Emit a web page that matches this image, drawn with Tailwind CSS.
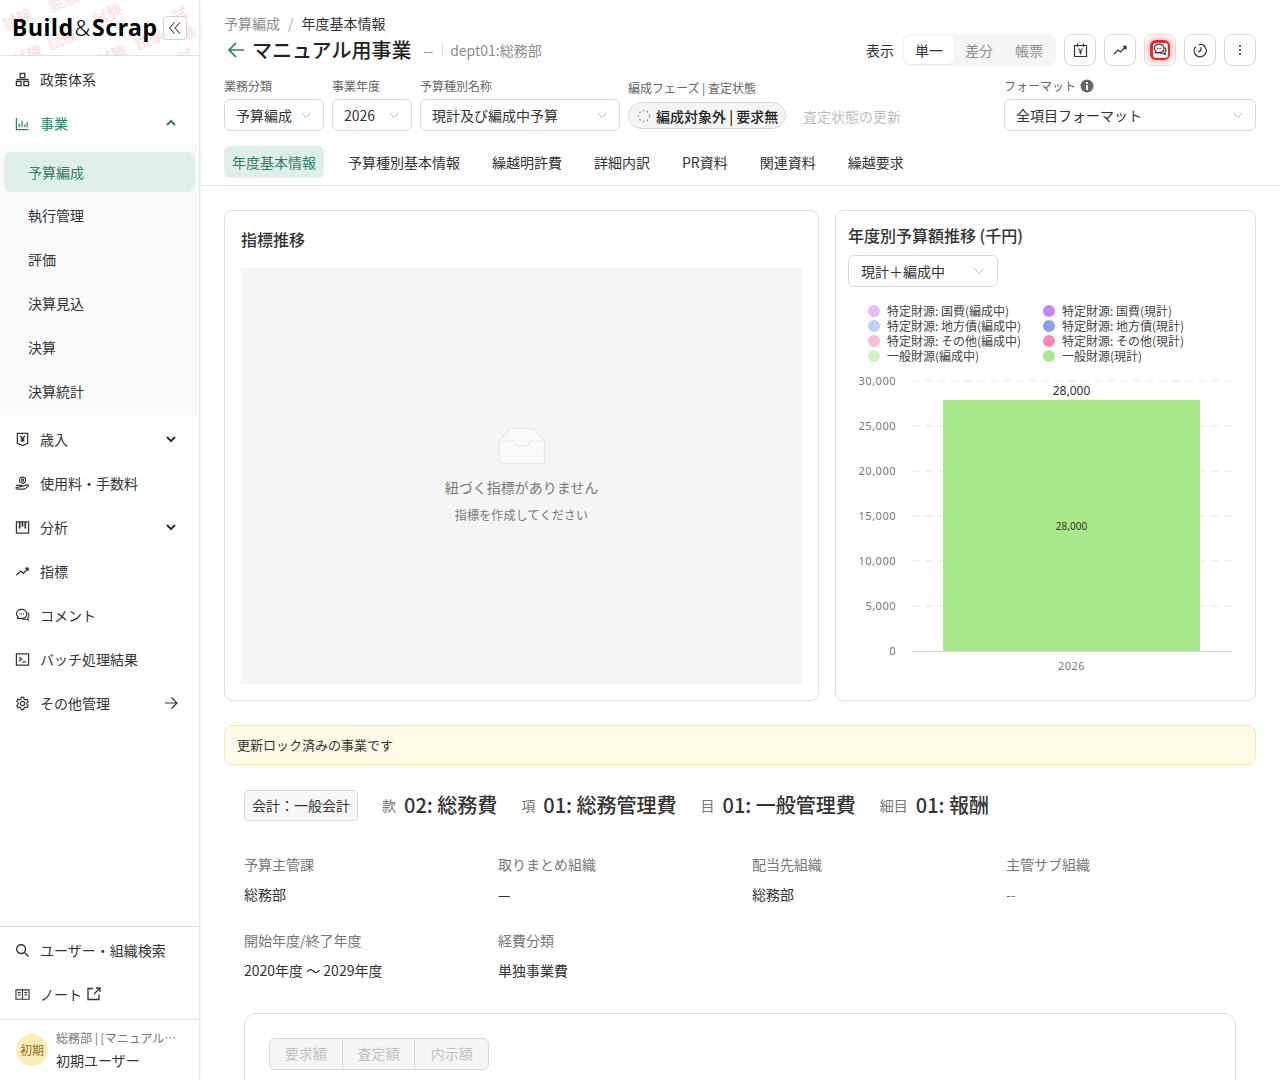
<!DOCTYPE html>
<html lang="ja">
<head>
    <meta charset="UTF-8">
    <title>年度基本情報</title>
    <script src="https://cdn.jsdelivr.net/npm/@tailwindcss/browser@4"></script>
</head>
<body class="bg-white text-[#333] font-['Noto_Sans_CJK_JP','Noto_Sans',sans-serif] text-sm">
<div class="flex w-[1280px] h-[1080px] overflow-hidden">

    <!-- サイドバー -->
    <aside class="w-[200px] shrink-0 h-full flex flex-col border-r border-[#e8e8e8] shadow-[1px_0_3px_rgba(0,0,0,0.06)] bg-white z-10">
        <div class="relative h-[56px] shrink-0 border-b border-[#e0e0e0] overflow-hidden flex items-center justify-between pl-3 pr-[12px]">
            <span class="absolute left-[2px] top-[8px] -rotate-[25deg] text-[15px] text-[#fadbdf]">試験</span>
            <span class="absolute left-[48px] top-[-10px] -rotate-[25deg] text-[15px] text-[#fadbdf]">試験</span>
            <span class="absolute left-[92px] top-[3px] -rotate-[25deg] text-[15px] text-[#fadbdf]">試験</span>
            <span class="absolute left-[176px] top-[0px] -rotate-[25deg] text-[15px] text-[#fadbdf]">試験</span>
            <span class="absolute left-[47px] top-[28px] -rotate-[25deg] text-[15px] text-[#fadbdf]">試験</span>
            <span class="absolute left-[134px] top-[28px] -rotate-[25deg] text-[15px] text-[#fadbdf]">試験</span>
            <span class="absolute left-[12px] top-[44px] -rotate-[25deg] text-[15px] text-[#fadbdf]">試験</span>
            <span class="absolute left-[97px] top-[44px] -rotate-[25deg] text-[15px] text-[#fadbdf]">試験</span>
            <span class="absolute left-[182px] top-[44px] -rotate-[25deg] text-[15px] text-[#fadbdf]">試験</span>
            <div class="relative flex items-baseline text-[23px] leading-none font-bold text-black font-['Noto_Sans',sans-serif] tracking-[0.6px]">Build<span class="font-light text-[22px] mx-[1px]">&amp;</span>Scrap</div>
            <button class="relative w-6 h-6 border border-[#d0d0d0] rounded bg-white/70 flex items-center justify-center text-[#444]">
                <svg class="w-4 h-4" viewBox="0 0 16 16" fill="none" stroke="currentColor" stroke-width="1.1"><path d="M7.5 2.5 2.5 8l5 5.5M13 2.5 8 8l5 5.5"/></svg>
            </button>
        </div>

        <nav class="flex flex-col grow pt-[1px]">
            <a class="h-11 flex items-center gap-[10px] pl-[15px] text-[#333]">
                <svg class="w-[15px] h-[15px]" viewBox="0 0 16 16" fill="none" stroke="currentColor" stroke-width="1.4"><rect x="5.5" y="1.5" width="5" height="4.5"/><rect x="1.5" y="10" width="5" height="4.5"/><rect x="9.5" y="10" width="5" height="4.5"/><path d="M1.5 8h13"/></svg>
                政策体系
            </a>
            <a class="h-11 flex items-center gap-[10px] pl-[15px] pr-[22px] text-[#2f7d6b]">
                <svg class="w-[15px] h-[15px]" viewBox="0 0 16 16" fill="none" stroke="currentColor" stroke-width="1.3"><path d="M1.5 2v12.5h13M4.5 8v4M7.5 5v7M10.5 9v3M13 6.5V12"/></svg>
                <span class="grow">事業</span>
                <svg class="w-[12px] h-[12px]" viewBox="0 0 12 12" fill="none" stroke="currentColor" stroke-width="2"><path d="M2 8l4-4 4 4"/></svg>
            </a>
            <div class="flex flex-col bg-[#fafafa] pt-[7px] pb-[2px]">
                <a class="mx-1 h-10 flex items-center pl-[24px] rounded-lg bg-[#deefe9] text-[#2f7d6b]">予算編成</a>
                <a class="h-11 mt-[1px] flex items-center pl-[28px]">執行管理</a>
                <a class="h-11 flex items-center pl-[28px]">評価</a>
                <a class="h-11 flex items-center pl-[28px]">決算見込</a>
                <a class="h-11 flex items-center pl-[28px]">決算</a>
                <a class="h-11 flex items-center pl-[28px]">決算統計</a>
            </div>
            <a class="h-11 mt-[2px] flex items-center gap-[10px] pl-[15px] pr-[22px]">
                <svg class="w-[15px] h-[15px]" viewBox="0 0 16 16" fill="none" stroke="currentColor" stroke-width="1.3"><path d="M2.5 1.5h11V12L8 14.5 2.5 12zM5.5 4 8 7l2.500-3M8 7v4M6 7.500h4M6 9.300h4"/></svg>
                <span class="grow">歳入</span>
                <svg class="w-[12px] h-[12px]" viewBox="0 0 12 12" fill="none" stroke="currentColor" stroke-width="2"><path d="M2 4l4 4 4-4"/></svg>
            </a>
            <a class="h-11 flex items-center gap-[10px] pl-[15px]">
                <svg class="w-[15px] h-[15px]" viewBox="0 0 16 16" fill="none" stroke="currentColor" stroke-width="1.2"><circle cx="8" cy="4.500" r="3.300"/><circle cx="8" cy="4.500" r="1.200"/><path d="M1 10h5.500c1 0 1.500.5 1.500 1.200H5.500M8 11l5-1.500c1.200-.3 1.800 1 1 1.600L10 14H3c-1 0-2-.5-2-1.500z"/></svg>
                使用料・手数料
            </a>
            <a class="h-11 flex items-center gap-[10px] pl-[15px] pr-[22px]">
                <svg class="w-[15px] h-[15px]" viewBox="0 0 16 16" fill="none" stroke="currentColor" stroke-width="1.3"><rect x="1.500" y="2" width="13" height="12"/><path d="M5 2v7M8 2v5M11 2v7" stroke-width="1.800"/></svg>
                <span class="grow">分析</span>
                <svg class="w-[12px] h-[12px]" viewBox="0 0 12 12" fill="none" stroke="currentColor" stroke-width="2"><path d="M2 4l4 4 4-4"/></svg>
            </a>
            <a class="h-11 flex items-center gap-[10px] pl-[15px]">
                <svg class="w-[15px] h-[15px]" viewBox="0 0 16 16" fill="none" stroke="currentColor" stroke-width="1.4"><path d="M1.500 12 6 7.500 9 10l5-5.500M11 4.500h3v3"/></svg>
                指標
            </a>
            <a class="h-11 flex items-center gap-[10px] pl-[15px]">
                <svg class="w-[15px] h-[15px]" viewBox="0 0 16 16" fill="none" stroke="currentColor" stroke-width="1.2"><path d="M7 1.500c3.200 0 5.500 2 5.500 4.800S10.200 11 7 11H2.500l.8-1.700C2 8.500 1.500 7.400 1.500 6.300 1.500 3.500 3.800 1.500 7 1.500z"/><path d="M13.500 5c1 .8 1.300 2 1.300 3 0 1-.5 2-1.300 2.700l.8 2.300-3.500-1.200H7.500"/><path d="M4.700 6.300h.9M6.600 6.300h.9M8.500 6.300h.9"/></svg>
                コメント
            </a>
            <a class="h-11 flex items-center gap-[10px] pl-[15px]">
                <svg class="w-[15px] h-[15px]" viewBox="0 0 16 16" fill="none" stroke="currentColor" stroke-width="1.3"><rect x="1.500" y="2" width="13" height="12"/><path d="m4.500 5.500 2.500 2-2.500 2M8 10.500h3.500"/></svg>
                バッチ処理結果
            </a>
            <a class="h-11 flex items-center gap-[10px] pl-[15px] pr-[21px]">
                <svg class="w-[15px] h-[15px]" viewBox="0 0 16 16" fill="none" stroke="currentColor" stroke-width="1.2"><circle cx="8" cy="8" r="2.300"/><path d="M6.700 1.500h2.600l.4 1.900 1.300.7 1.800-.6 1.300 2.300-1.400 1.300v1.800l1.400 1.300-1.300 2.300-1.800-.6-1.300.7-.4 1.900H6.700l-.4-1.900-1.300-.7-1.800.6-1.300-2.300 1.400-1.300V7.100L1.900 5.800l1.300-2.300 1.800.6 1.300-.7z"/></svg>
                <span class="grow">その他管理</span>
                <svg class="w-[14px] h-[14px]" viewBox="0 0 14 14" fill="none" stroke="currentColor" stroke-width="1.200"><path d="M1 7h12M7.500 1.500 13 7l-5.500 5.500"/></svg>
            </a>
        </nav>

        <div class="border-t border-[#e0e0e0] pt-[1px] pb-[3px]">
            <a class="h-11 flex items-center gap-[10px] pl-[15px]">
                <svg class="w-[15px] h-[15px]" viewBox="0 0 16 16" fill="none" stroke="currentColor" stroke-width="1.500"><circle cx="6.500" cy="6.500" r="4.700"/><path d="m10 10 4.500 4.500"/></svg>
                ユーザー・組織検索
            </a>
            <a class="h-11 flex items-center gap-[10px] pl-[15px]">
                <svg class="w-[15px] h-[15px]" viewBox="0 0 16 16" fill="none" stroke="currentColor" stroke-width="1.200"><path d="M1 3h14v10H1zM8 3v10M3 6h3M3 8.500h3M10 6h3M10 8.500h3"/></svg>
                <span class="flex items-center gap-[5px]">ノート
                    <svg class="w-[14px] h-[14px]" viewBox="0 0 14 14" fill="none" stroke="currentColor" stroke-width="1.300"><path d="M6 1.500H1v11h11V7.500M7 7l5.500-5.500M9 1h4v4"/></svg>
                </span>
            </a>
        </div>
        <div class="h-[61px] shrink-0 border-t border-[#e0e0e0] flex items-center gap-2 pl-4 pr-5 pb-[1px]">
            <div class="w-8 h-8 shrink-0 rounded-full bg-[#fcedb5] text-[#8a6d1f] text-xs flex items-center justify-center">初期</div>
            <div class="min-w-0">
                <div class="text-xs text-[#777] truncate">総務部 | [マニュアル用事業]</div>
                <div class="text-sm text-[#333] mt-[4px]">初期ユーザー</div>
            </div>
        </div>
    </aside>

    <!-- メイン -->
    <main class="grow min-w-0 h-full overflow-hidden">
        <header class="border-b border-[#e5e5e5] h-[186px] px-6 pt-[13px]">
            <div class="flex justify-between">
                <div>
                    <div class="flex items-center gap-2 leading-5">
                        <span class="text-[#8c8c8c]">予算編成</span><span class="text-[#aaa]">/</span><span>年度基本情報</span>
                    </div>
                    <div class="flex items-center mt-[2px] h-[30px]">
                        <svg class="w-[18px] h-[18px] ml-[3px] mr-[7px] text-[#2f7d6b]" viewBox="0 0 18 18" fill="none" stroke="currentColor" stroke-width="1.700"><path d="M17 9H2M9 2 2 9l7 7"/></svg>
                        <h1 class="text-xl font-medium text-[#222]">マニュアル用事業</h1>
                        <span class="ml-3 text-[#8c8c8c]">--</span>
                        <span class="ml-[9px] mr-[7px] w-px h-3 bg-[#ddd]"></span>
                        <span class="text-[#8c8c8c]">dept01:総務部</span>
                    </div>
                </div>
                <div class="flex items-center gap-2 h-8 mt-[21px]">
                    <span class="text-[#333]">表示</span>
                    <div class="flex items-center w-[154px] h-8 bg-[#f5f5f5] rounded-lg p-[2px]">
                        <span class="w-[50px] h-7 flex items-center justify-center bg-white rounded-md shadow-[0_1px_2px_rgba(0,0,0,0.05)]">単一</span>
                        <span class="w-[50px] h-7 flex items-center justify-center text-[#8c8c8c]">差分</span>
                        <span class="w-[50px] h-7 flex items-center justify-center text-[#8c8c8c]">帳票</span>
                    </div>
                    <div class="flex gap-2">
                        <button class="w-8 h-8 border border-[#d9d9d9] rounded-lg flex items-center justify-center">
                            <svg class="w-[15px] h-[15px]" viewBox="0 0 15 15" fill="none" stroke="currentColor" stroke-width="1.200"><path d="M1.500 2.500h12v11h-12zM4.500 .5v3.500M10.500 .5v3.500" /><path d="M5.500 5.500l2 2.500 2-2.500M7.500 8v3.500M6 9h3" stroke-width="1.100"/></svg>
                        </button>
                        <button class="w-8 h-8 border border-[#d9d9d9] rounded-lg flex items-center justify-center">
                            <svg class="w-[14px] h-[14px]" viewBox="0 0 14 14" fill="none" stroke="currentColor" stroke-width="1.300"><path d="M1 11 5 7l2.500 2L13 3.500M10 3.500h3v3"/></svg>
                        </button>
                        <button class="w-8 h-8 border border-[#e5e5e5] rounded-lg flex items-center justify-center">
                            <span class="w-[20px] h-[20px] rounded-md bg-[#d32f2f] shadow-[0_0_6px_3px_rgba(220,50,50,0.3)] flex items-center justify-center">
                                <span class="w-[15px] h-[15px] rounded-[3px] bg-[#f3e8e8] flex items-center justify-center">
                                    <svg class="w-[14px] h-[14px]" viewBox="0 0 16 16" fill="none" stroke="#333" stroke-width="1.200"><path d="M13.500 5c1 .8 1.300 2 1.300 3 0 1-.5 2-1.300 2.700l.8 2.300-3.500-1.200H7.500"/><path d="M7 1.500c3.200 0 5.500 2 5.500 4.800S10.200 11 7 11H2.500l.8-1.700C2 8.500 1.500 7.400 1.500 6.300 1.500 3.500 3.800 1.500 7 1.500z"/><path d="M4.700 6.300h.9M6.600 6.300h.9M8.500 6.300h.9"/></svg>
                                </span>
                            </span>
                        </button>
                        <button class="w-8 h-8 border border-[#d9d9d9] rounded-lg flex items-center justify-center">
                            <svg class="w-[15px] h-[15px]" viewBox="0 0 16 16" fill="none" stroke="currentColor" stroke-width="1.300"><path d="M6 1.800A6.500 6.500 0 1 1 2.800 12.500 6.500 6.500 0 0 1 2.700 4M8.500 4.500V8l-3 1.500"/></svg>
                        </button>
                        <button class="w-8 h-8 border border-[#d9d9d9] rounded-lg flex items-center justify-center">
                            <svg class="w-[14px] h-[14px]" viewBox="0 0 14 14" fill="currentColor"><circle cx="7" cy="3" r="1"/><circle cx="7" cy="7" r="1"/><circle cx="7" cy="11" r="1"/></svg>
                        </button>
                    </div>
                </div>
            </div>

            <div class="flex items-end mt-[12px]">
                <div class="w-[100px]">
                    <div class="text-xs text-[#666] leading-4 mb-[5px]">業務分類</div>
                    <div class="h-8 border border-[#d9d9d9] rounded-md flex items-center justify-between pl-[11px] pr-[11px]">予算編成
                        <svg class="w-3 h-3 text-[#bbb]" viewBox="0 0 12 12" fill="none" stroke="currentColor"><path d="m1.500 3.500 4.500 5 4.500-5"/></svg></div>
                </div>
                <div class="w-[80px] ml-2">
                    <div class="text-xs text-[#666] leading-4 mb-[5px]">事業年度</div>
                    <div class="h-8 border border-[#d9d9d9] rounded-md flex items-center justify-between pl-[11px] pr-[11px]">2026
                        <svg class="w-3 h-3 text-[#bbb]" viewBox="0 0 12 12" fill="none" stroke="currentColor"><path d="m1.500 3.500 4.500 5 4.500-5"/></svg></div>
                </div>
                <div class="w-[200px] ml-2">
                    <div class="text-xs text-[#666] leading-4 mb-[5px]">予算種別名称</div>
                    <div class="h-8 border border-[#d9d9d9] rounded-md flex items-center justify-between pl-[11px] pr-[11px]">現計及び編成中予算
                        <svg class="w-3 h-3 text-[#bbb]" viewBox="0 0 12 12" fill="none" stroke="currentColor"><path d="m1.500 3.500 4.500 5 4.500-5"/></svg></div>
                </div>
                <div class="ml-2 w-[376px]">
                    <div class="text-xs text-[#666] leading-4 mb-[6px]">編成フェーズ | 査定状態</div>
                    <div class="flex items-center h-[27px] mb-[2px]">
                        <span class="h-[27px] w-[158px] border border-[#d9d9d9] bg-[#f5f5f5] rounded-full flex items-center gap-[5px] pl-[8px] text-sm text-[#222] font-medium whitespace-nowrap">
                            <svg class="w-[14px] h-[14px] text-[#999]" viewBox="0 0 14 14" fill="none" stroke="currentColor" stroke-width="1.500" stroke-dasharray="1.500 2.500"><circle cx="7" cy="7" r="5.500"/></svg>
                            編成対象外 | 要求無
                        </span>
                        <span class="ml-[17px] text-[#bfbfbf]">査定状態の更新</span>
                    </div>
                </div>
                <div class="w-[252px]">
                    <div class="text-xs text-[#666] leading-4 mb-[5px] flex items-center gap-[4px]">フォーマット
                        <svg class="w-[14px] h-[14px] text-[#666]" viewBox="0 0 14 14"><circle cx="7" cy="7" r="6.500" fill="currentColor"/><path d="M6 6h2v5H6zM6 3h2v2H6z" fill="#fff"/></svg></div>
                    <div class="h-8 border border-[#d9d9d9] rounded-md flex items-center justify-between pl-[11px] pr-[11px]">全項目フォーマット
                        <svg class="w-3 h-3 text-[#bbb]" viewBox="0 0 12 12" fill="none" stroke="currentColor"><path d="m1.500 3.500 4.500 5 4.500-5"/></svg></div>
                </div>
            </div>

            <div class="flex gap-4 mt-[15px]">
                <span class="h-8 px-2 flex items-center rounded-md bg-[#deefe9] text-[#2f7d6b]">年度基本情報</span>
                <span class="h-8 px-2 flex items-center">予算種別基本情報</span>
                <span class="h-8 px-2 flex items-center">繰越明許費</span>
                <span class="h-8 px-2 flex items-center">詳細内訳</span>
                <span class="h-8 px-2 flex items-center">PR資料</span>
                <span class="h-8 px-2 flex items-center">関連資料</span>
                <span class="h-8 px-2 flex items-center">繰越要求</span>
            </div>
        </header>

        <div class="px-6 pt-6">
            <div class="flex gap-4 h-[491px]">
                <section class="w-[595px] border border-[#e0e0e0] rounded-lg px-4 pt-[15px] pb-4 flex flex-col">
                    <h2 class="text-base font-medium text-[#333] leading-[26px]">指標推移</h2>
                    <div class="mt-[16px] grow bg-[#f5f5f5] flex flex-col items-center justify-center">
                        <svg class="w-[48px] h-[38px] text-[#e6e6e6]" viewBox="0 0 48 38" fill="#fafafa" stroke="currentColor" stroke-width="1.200"><path d="M1.500 14 12 1.500h24L46.500 14v20a2.500 2.500 0 0 1-2.500 2.500H4A2.500 2.500 0 0 1 1.500 34z"/><path d="M1.500 14H15c1 0 1.500 .5 1.500 1.500S17 19 19 19h10c2 0 2.500-2 2.500-3.500S32 14 33 14h13.500" fill="none"/></svg>
                        <p class="mt-[12px] text-[#777] leading-5">紐づく指標がありません</p>
                        <p class="mt-[8px] text-xs text-[#777] leading-5 tracking-[0.2px]">指標を作成してください</p>
                    </div>
                </section>
                <section class="w-[421px] border border-[#e0e0e0] rounded-lg pl-[12px] pr-4 pt-[11px]">
                    <h2 class="text-base font-medium text-[#333] leading-[26px]">年度別予算額推移 (千円)</h2>
                    <div class="mt-[7px] w-[150px] h-8 border border-[#d9d9d9] rounded-md flex items-center justify-between pl-3 pr-3">現計＋編成中
                        <svg class="w-3 h-3 text-[#bbb]" viewBox="0 0 12 12" fill="none" stroke="currentColor"><path d="m1.500 3.500 4.500 5 4.500-5"/></svg></div>
                    <div class="mt-[16px] ml-[20px] grid grid-cols-[175px_175px] text-xs leading-[15px] text-[#444]">
                        <div class="flex items-center gap-[7px]"><i class="w-3 h-3 rounded-full bg-[#e3bdf8]"></i>特定財源: 国費(編成中)</div>
                        <div class="flex items-center gap-[7px]"><i class="w-3 h-3 rounded-full bg-[#c688f2]"></i>特定財源: 国費(現計)</div>
                        <div class="flex items-center gap-[7px]"><i class="w-3 h-3 rounded-full bg-[#c0cffa]"></i>特定財源: 地方債(編成中)</div>
                        <div class="flex items-center gap-[7px]"><i class="w-3 h-3 rounded-full bg-[#8aa0ec]"></i>特定財源: 地方債(現計)</div>
                        <div class="flex items-center gap-[7px]"><i class="w-3 h-3 rounded-full bg-[#fdbbdc]"></i>特定財源: その他(編成中)</div>
                        <div class="flex items-center gap-[7px]"><i class="w-3 h-3 rounded-full bg-[#fb82ba]"></i>特定財源: その他(現計)</div>
                        <div class="flex items-center gap-[7px]"><i class="w-3 h-3 rounded-full bg-[#d0f3bf]"></i>一般財源(編成中)</div>
                        <div class="flex items-center gap-[7px]"><i class="w-3 h-3 rounded-full bg-[#a9e88b]"></i>一般財源(現計)</div>
                    </div>
                    <svg class="mt-[12px] -ml-[3px] block" width="400" height="310" viewBox="845 375 400 310" font-family="'Noto Sans','Noto Sans CJK JP',sans-serif">
                        <g stroke="#e6e6e6" stroke-dasharray="8 5">
                            <path d="M912 381H1232M912 426H1232M912 471H1232M912 516H1232M912 561H1232M912 606H1232"/>
                        </g>
                        <path d="M912 651.500H1232" stroke="#d5d5d5"/>
                        <g fill="#777" font-size="11" text-anchor="end" letter-spacing="0.5">
                            <text x="896" y="385">30,000</text><text x="896" y="430">25,000</text><text x="896" y="475">20,000</text><text x="896" y="520">15,000</text><text x="896" y="565">10,000</text><text x="896" y="610">5,000</text><text x="896" y="655">0</text>
                        </g>
                        <rect x="943" y="400" width="257" height="251" fill="#a9e88b"/>
                        <text x="1071.500" y="395" text-anchor="middle" font-size="12" fill="#333">28,000</text>
                        <text x="1071.500" y="530" text-anchor="middle" font-size="10" fill="#333">28,000</text>
                        <text x="1071.500" y="670" text-anchor="middle" font-size="11" letter-spacing="0.5" fill="#777">2026</text>
                    </svg>
                </section>
            </div>

            <div class="mt-6 h-10 flex items-center bg-[#fffbe6] border border-[#f6e7a6] rounded-lg px-3 text-[13px] text-[#333]">更新ロック済みの事業です</div>

            <div class="px-5 pt-[25px]">
                <div class="flex items-center h-[31px] [&>span]:pb-[2px]">
                    <span class="h-[31px] w-[114px] flex items-center justify-center bg-[#f7f7f7] border border-[#d9d9d9] rounded text-sm">会計：一般会計</span>
                    <span class="ml-6 text-sm text-[#777]">款</span><span class="ml-2 text-xl font-medium text-[#333]">02: 総務費</span>
                    <span class="ml-6 text-sm text-[#777]">項</span><span class="ml-2 text-xl font-medium text-[#333]">01: 総務管理費</span>
                    <span class="ml-6 text-sm text-[#777]">目</span><span class="ml-2 text-xl font-medium text-[#333]">01: 一般管理費</span>
                    <span class="ml-6 text-sm text-[#777]">細目</span><span class="ml-2 text-xl font-medium text-[#333]">01: 報酬</span>
                </div>
                <div class="grid grid-cols-[254px_254px_254px_254px] mt-[33px] leading-5">
                    <div class="text-[#777]">予算主管課</div><div class="text-[#777]">取りまとめ組織</div><div class="text-[#777]">配当先組織</div><div class="text-[#777]">主管サブ組織</div>
                    <div class="mt-[10px]">総務部</div><div class="mt-[10px]">—</div><div class="mt-[10px]">総務部</div><div class="mt-[10px] text-[#777]">--</div>
                    <div class="mt-[26px] text-[#777]">開始年度/終了年度</div><div class="mt-[26px] text-[#777]">経費分類</div><div></div><div></div>
                    <div class="mt-[10px]">2020年度 ～ 2029年度</div><div class="mt-[10px]">単独事業費</div>
                </div>
                <div class="mt-[33px] h-[100px] border border-[#e0e0e0] rounded-xl pl-6 pt-6">
                    <div class="flex w-[220px] h-8 bg-[#f5f5f5] border border-[#d9d9d9] rounded-md text-[#bfbfbf] divide-x divide-[#d9d9d9] [&>span]:pb-[2px]">
                        <span class="w-1/3 flex items-center justify-center">要求額</span>
                        <span class="w-1/3 flex items-center justify-center">査定額</span>
                        <span class="w-1/3 flex items-center justify-center">内示額</span>
                    </div>
                </div>
            </div>
        </div>
    </main>
</div>
</body>
</html>
